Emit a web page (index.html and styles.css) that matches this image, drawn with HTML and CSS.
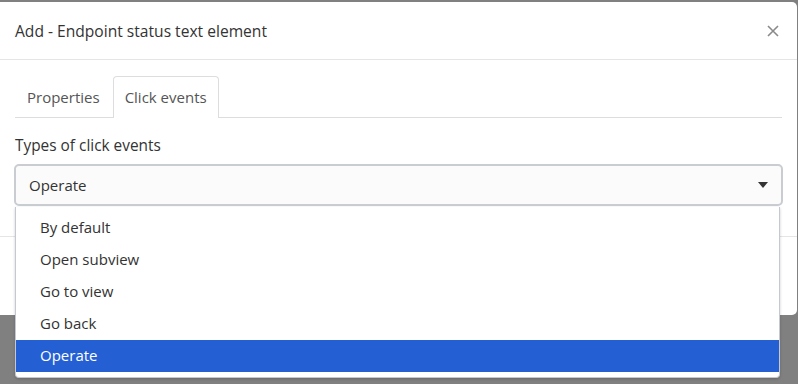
FILE: index.html
```html
<!DOCTYPE html>
<html lang="en">
<head>
  <meta charset="UTF-8">
  <meta name="viewport" content="width=device-width, initial-scale=1.0">
  <title>Add - Endpoint status text element</title>
  <link rel="stylesheet" href="styles.css">
</head>
<body>
  <div class="modal">
    <div class="modal-header">
      <h4 class="modal-title">Add - Endpoint status text element</h4>
      <button class="close" type="button">
        <svg width="12" height="12" viewBox="0 0 12 12"><path d="M1 1L11 11M11 1L1 11" stroke="#8a8a8a" stroke-width="1.6"/></svg>
      </button>
    </div>
    <div class="modal-body">
      <ul class="nav-tabs">
        <li class="tab">Properties</li>
        <li class="tab active">Click events</li>
      </ul>
      <div class="form-group">
        <label class="field-label">Types of click events</label>
        <div class="select-wrap">
          <div class="select">
            <span>Operate</span>
            <span class="caret"></span>
          </div>
          <ul class="dropdown">
            <li class="option">By default</li>
            <li class="option">Open subview</li>
            <li class="option">Go to view</li>
            <li class="option">Go back</li>
            <li class="option selected">Operate</li>
          </ul>
        </div>
      </div>
    </div>
    <div class="modal-footer"></div>
  </div>
</body>
</html>
```
FILE: styles.css
```css
body {
  margin: 0;
  background-color: #808080;
  font-family: "Open Sans", Lato, sans-serif;
  color: #333;
  height: 384px;
  overflow: hidden;
}
.modal {
  margin-top: 2px;
  width: 797px;
  height: 313px;
  background-color: #fff;
  border-radius: 0 5px 5px 0;
  display: flex;
  flex-direction: column;
}
.modal-header {
  height: 57px;
  padding: 0 15px;
  border-bottom: 1px solid #e5e5e5;
  display: flex;
  align-items: center;
  justify-content: space-between;
}
.modal-title {
  margin: 0;
  font-size: 15.6px;
  font-weight: normal;
  color: #333;
}
.close {
  border: none;
  background: none;
  padding: 0;
  margin-right: 3px;
  display: flex;
}
.modal-body {
  padding: 16px 15px 0 15px;
  height: 160px;
  border-bottom: 1px solid #e5e5e5;
}
.nav-tabs {
  list-style: none;
  margin: 0;
  padding: 0;
  display: flex;
  border-bottom: 1px solid #ddd;
  height: 41px;
}
.tab {
  padding: 0 11px;
  margin-right: 1px;
  line-height: 40px;
  font-size: 15px;
  color: #555;
  border: 1px solid transparent;
  border-bottom: none;
  border-radius: 4px 4px 0 0;
}
.tab.active {
  border-color: #ddd;
  background-color: #fff;
  height: 41px;
}
.form-group {
  margin-top: 18px;
}
.field-label {
  display: block;
  font-size: 15.4px;
  line-height: 20px;
  margin-bottom: 8px;
}
.select-wrap {
  position: relative;
  width: 769px;
  margin-left: -1px;
}
.select {
  height: 38px;
  border: 2px solid #c9cdd1;
  border-radius: 5px;
  background-color: #fbfbfb;
  display: flex;
  align-items: center;
  justify-content: space-between;
  padding: 0 13px;
  font-size: 15px;
}
.caret {
  width: 0;
  height: 0;
  border-left: 5px solid transparent;
  border-right: 5px solid transparent;
  border-top: 6px solid #333;
}
.dropdown {
  position: absolute;
  top: 43px;
  left: 1px;
  width: 763px;
  margin: 0;
  padding: 5px 0;
  list-style: none;
  background-color: #fff;
  border: 1px solid #c5c9cd;
  border-top: none;
  border-radius: 0 0 4px 4px;
  box-shadow: 0 1px 3px rgba(0, 0, 0, 0.2);
}
.option {
  height: 32px;
  line-height: 31px;
  padding: 0 24px;
  font-size: 15px;
  color: #333;
}
.option.selected {
  background-color: #245fd4;
  color: #fff;
}
```
